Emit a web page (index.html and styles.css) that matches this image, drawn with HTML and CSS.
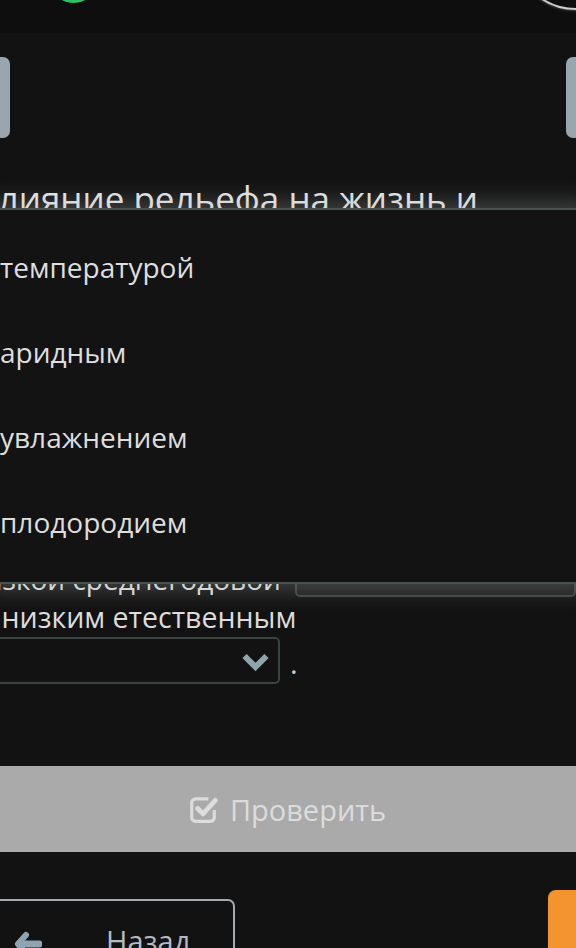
FILE: index.html
```html
<!DOCTYPE html>
<html lang="ru">
<head>
<meta charset="utf-8">
<title>Тест</title>
<link rel="stylesheet" href="styles.css">
</head>
<body>
<div class="topbar">
  <div class="dot"></div>
  <div class="ring"></div>
</div>
<div class="tabs">
  <div class="tab tab-left"></div>
  <div class="tab tab-right"></div>
</div>
<div class="content">
  <div class="title">Влияние рельефа на жизнь и</div>
  <div class="covered">
    <div class="line">хозяйственную деятельность</div>
    <div class="line">населения. Горные районы</div>
    <div class="line">отличаются климатом с</div>
  </div>
  <div class="line-a">
    <span class="txt">низкой среднегодовой</span>
    <span class="select select-small"></span>
  </div>
  <div class="line-b">и низким етественным</div>
  <div class="line-c">
    <div class="select select-main">
      <svg class="chev" width="29" height="20" viewBox="0 0 29 20"><polyline points="3.5,4 14.5,15 25.5,4" fill="none" stroke="#8fa5aa" stroke-width="6" stroke-linejoin="miter"/></svg>
    </div>
    <span class="period">.</span>
  </div>
</div>
<div class="check-btn">
  <svg class="check-ico" width="30" height="30" viewBox="0 0 28 28"><path d="M19 4.5 H7 a3.5 3.5 0 0 0 -3.5 3.5 v14 a3.5 3.5 0 0 0 3.5 3.5 h14 a3.5 3.5 0 0 0 3.5 -3.5 v-7" fill="none" stroke="#dcdcdc" stroke-width="3"/><polyline points="9,13.5 14,18.5 25.5,6" fill="none" stroke="#dcdcdc" stroke-width="4.5" stroke-linecap="round" stroke-linejoin="round"/></svg>
  <span>Проверить</span>
</div>
<div class="footer">
  <div class="back-btn">
    <svg class="arrow" width="28" height="28" viewBox="0 0 28 28"><polyline points="12,5 4,14 12,23" fill="none" stroke="#8fa3b2" stroke-width="6" stroke-linecap="round" stroke-linejoin="round"/><line x1="5" y1="14" x2="25" y2="14" stroke="#8fa3b2" stroke-width="7" stroke-linecap="round"/></svg>
    <span class="back-txt">Назад</span>
  </div>
  <div class="next-btn"></div>
</div>
<div class="dropdown">
  <div class="opt">температурой</div>
  <div class="opt">аридным</div>
  <div class="opt">увлажнением</div>
  <div class="opt">плодородием</div>
</div>
</body>
</html>
```

FILE: styles.css
```css
html, body {
  margin: 0;
  padding: 0;
}
body {
  width: 576px;
  height: 948px;
  overflow: hidden;
  position: relative;
  background: #121212;
  font-family: "Open Sans", "Noto Sans", sans-serif;
  color: #dedede;
}
.topbar {
  height: 33px;
  background: #0e0e0e;
  display: flex;
  justify-content: space-between;
  align-items: flex-start;
  overflow: hidden;
}
.dot {
  width: 47px;
  height: 47px;
  border-radius: 50%;
  background: #2bc363;
  margin: -44px 0 0 50px;
}
.ring {
  width: 122px;
  height: 122px;
  border-radius: 50%;
  border: 2px solid #cfcfcf;
  margin: -116px -63px 0 0;
  box-shadow: 0 0 3px #777;
}
.tabs {
  display: flex;
  justify-content: space-between;
  margin-top: 24px;
  height: 81px;
}
.tab {
  width: 10px;
  background: #9aa6af;
}
.tab-left { border-radius: 0 7px 7px 0; }
.tab-right { border-radius: 7px 0 0 7px; }

.content {
  margin-left: -24px;
  margin-top: 37px;
}
.title {
  font-size: 35px;
  line-height: 48px;
  white-space: nowrap;
  color: #e4e4e4;
}
.covered {
  height: 338px;
  overflow: hidden;
  font-size: 29px;
  line-height: 56px;
}
.line { white-space: nowrap; }
.line-a {
  display: flex;
  align-items: flex-start;
  font-size: 28px;
  line-height: 36px;
  height: 36px;
  margin-left: -9px;
  white-space: nowrap;
}
.select {
  border: 2px solid #39433f;
  border-radius: 5px;
  box-sizing: border-box;
}
.select-small {
  display: block;
  margin-left: 14px;
  margin-top: -11px;
  width: 320px;
  height: 47px;
  background: #1c1d1d;
}
.line-b {
  font-size: 28.5px;
  line-height: 40px;
  white-space: nowrap;
  color: #dcdcdc;
}
.line-c {
  display: flex;
  align-items: flex-end;
}
.select-main {
  width: 304px;
  height: 47px;
  display: flex;
  align-items: center;
  justify-content: flex-end;
  padding-right: 8px;
}
.chev { display: block; margin-top: 2px; }
.period {
  font-size: 29px;
  line-height: 30px;
  margin-left: 10px;
  margin-bottom: 6px;
  color: #cfcfcf;
}
.check-btn {
  margin-top: 82px;
  height: 86px;
  background: #aaaaaa;
  display: flex;
  align-items: center;
  justify-content: center;
  gap: 12px;
  font-size: 29px;
  color: #dcdcdc;
}
.check-ico { display: block; margin-left: -2px; }
.footer {
  margin-top: 38px;
  display: flex;
  justify-content: space-between;
  align-items: flex-start;
}
.back-btn {
  margin-top: 9px;
  margin-left: -20px;
  width: 255px;
  height: 70px;
  box-sizing: border-box;
  border: 2px solid #a3abb1;
  border-radius: 7px;
  display: flex;
  align-items: flex-start;
  padding: 29px 0 0 32px;
}
.arrow { display: block; }
.back-txt {
  font-size: 29px;
  line-height: 30px;
  margin-left: 64px;
  margin-top: -4px;
  color: #b3bbc2;
}
.next-btn {
  width: 40px;
  height: 70px;
  background: #f3942f;
  border-radius: 8px 0 0 0;
  margin-right: -12px;
}
.dropdown {
  position: absolute;
  top: 208px;
  left: -10px;
  right: -10px;
  height: 376px;
  box-sizing: border-box;
  background: #131313;
  border-top: 2px solid #46534f;
  border-bottom: 2px solid #46534f;
  box-shadow: 0 0 22px 6px rgba(170, 175, 175, 0.32);
  padding: 14px 0 18px 10px;
}
.opt {
  height: 85px;
  display: flex;
  align-items: center;
  font-size: 28px;
  color: #dedede;
  white-space: nowrap;
}
```
